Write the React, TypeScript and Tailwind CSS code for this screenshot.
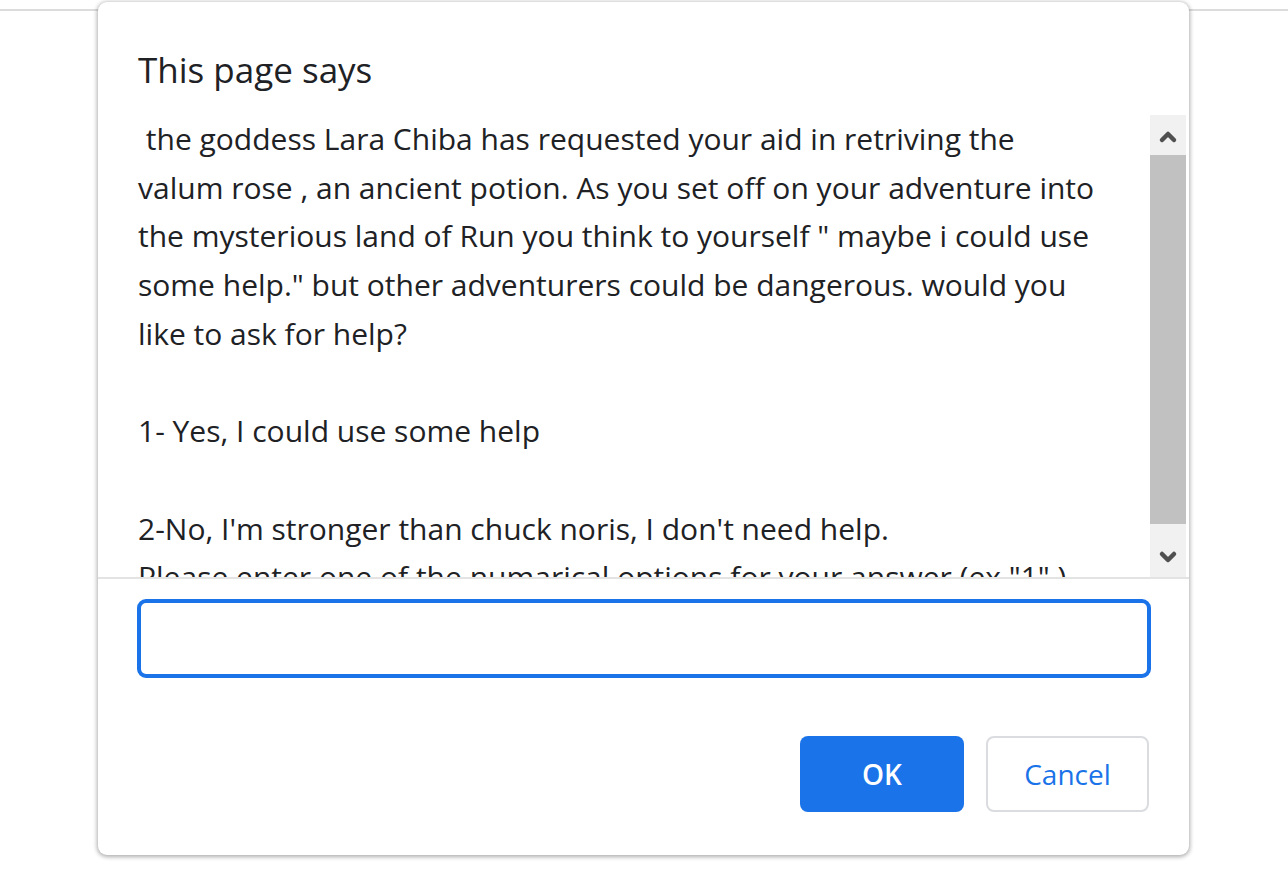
import { ChevronUp, ChevronDown } from "lucide-react";

/* ── Prompt content ──────────────────────────────── */
const LINES = [
  " the goddess Lara Chiba has requested your aid in retriving the",
  "valum rose , an ancient potion. As you set off on your adventure into",
  "the mysterious land of Run you think to yourself \" maybe i could use",
  "some help.\" but other adventurers could be dangerous. would you",
  "like to ask for help?",
  "",
  "1- Yes, I could use some help",
  "",
  "2-No, I'm stronger than chuck noris, I don't need help.",
  "Please enter one of the numarical options for your answer (ex \"1\" )",
];

function FakeScrollbar() {
  return (
    <div className="w-[36px] h-full flex flex-col bg-[#f1f1f1] shrink-0">
      <div className="h-[40px] flex items-center justify-center pt-[4px] text-[#505050]">
        <ChevronUp className="w-[24px] h-[24px]" strokeWidth={4.5} />
      </div>
      <div className="flex-1 bg-[#c1c1c1]" />
      <div className="h-[53px] flex items-center justify-center pt-[12px] text-[#505050]">
        <ChevronDown className="w-[24px] h-[24px]" strokeWidth={4.5} />
      </div>
    </div>
  );
}

export default function App() {
  return (
    <div
      className="relative w-full h-[871px] bg-white overflow-hidden"
      style={{ fontFamily: "'Open Sans', 'Noto Sans', sans-serif" }}
    >
      {/* page behind the dialog */}
      <div className="h-[11px] border-b-2 border-[#dcdcdc]" />

      {/* prompt dialog */}
      <div className="absolute left-[98px] top-[2px] w-[1091px] h-[853px] bg-white rounded-[9px] shadow-[0_1px_4px_1px_rgba(0,0,0,0.32)] flex flex-col pt-[44px]">
        <div className="pl-[40px] text-[35px] leading-[48px] text-[#202124]">
          This page says
        </div>

        <div className="mt-[21px] h-[464px] flex border-b-2 border-[#e3e3e3] pr-[3px]">
          <div className="flex-1 pl-[40px] overflow-hidden text-[30px] leading-[48.7px] text-[#202124] whitespace-pre">
            {LINES.map((l, i) => (
              <div key={i} className="h-[48.7px]">
                {l}
              </div>
            ))}
          </div>
          <FakeScrollbar />
        </div>

        <div className="pl-[39px] pr-[38px] mt-[20px]">
          <div className="h-[79px] rounded-[9px] border-[4px] border-[#1a73e8]" />
        </div>

        <div className="flex justify-end gap-[22px] pr-[40px] mt-[58px]">
          <button
            type="button"
            className="w-[164px] h-[76px] rounded-[8px] bg-[#1a73e8] text-white text-[28px] font-semibold"
          >
            OK
          </button>
          <button
            type="button"
            className="w-[163px] h-[76px] rounded-[8px] border-2 border-[#dadce0] bg-white text-[#1a73e8] text-[28px] font-medium"
          >
            Cancel
          </button>
        </div>
      </div>
    </div>
  );
}
